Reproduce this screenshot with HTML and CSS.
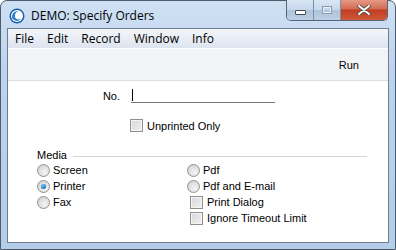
FILE: index.html
```html
<!DOCTYPE html>
<html lang="en">
<head>
    <meta charset="UTF-8">
    <title>DEMO: Specify Orders</title>
    <link rel="stylesheet" href="styles.css">
</head>
<body>
    <div class="window">
        <div class="titlebar">
            <svg class="app-icon" width="16" height="16" viewBox="0 0 16 16">
                <circle cx="8" cy="8" r="7.5" fill="#1d5fa8"/>
                <circle cx="8" cy="8" r="6" fill="#ffffff"/>
                <path d="M3 9 C3 5 6 3 9 3 C7 4 5.5 6 6 9 C6.5 11 9 12 12 11 C10.5 13 8 13.5 6 12.5 C4 11.5 3 10.5 3 9 Z" fill="#2d7fd0"/>
            </svg>
            <span class="title">DEMO: Specify Orders</span>
            <div class="caption-buttons">
                <div class="cap-btn cap-min"><span class="min-glyph"></span></div>
                <div class="cap-btn cap-max"><span class="max-glyph"></span></div>
                <div class="cap-btn cap-close">
                    <svg width="14" height="10" viewBox="0 0 14 10">
                        <path d="M2 1 L12 9 M12 1 L2 9" stroke="#4a4a4a" stroke-width="3.6" stroke-linecap="round"/>
                        <path d="M2 1 L12 9 M12 1 L2 9" stroke="#ffffff" stroke-width="2" stroke-linecap="round"/>
                    </svg>
                </div>
            </div>
        </div>
        <div class="client">
            <div class="menubar">
                <span>File</span>
                <span>Edit</span>
                <span>Record</span>
                <span>Window</span>
                <span>Info</span>
            </div>
            <div class="toolbar">
                <span class="run">Run</span>
            </div>
            <div class="form">
                <div class="field-row">
                    <label class="field-label">No.</label>
                    <div class="field-input"><span class="caret"></span></div>
                </div>
                <div class="check-row first-check">
                    <span class="checkbox"></span>
                    <span>Unprinted Only</span>
                </div>
                <div class="group-head">
                    <span>Media</span>
                    <span class="group-line"></span>
                </div>
                <div class="media">
                    <div class="media-col">
                        <div class="opt"><span class="radio"></span>Screen</div>
                        <div class="opt"><span class="radio checked"></span>Printer</div>
                        <div class="opt"><span class="radio"></span>Fax</div>
                    </div>
                    <div class="media-col">
                        <div class="opt"><span class="radio"></span>Pdf</div>
                        <div class="opt"><span class="radio"></span>Pdf and E-mail</div>
                        <div class="opt box-opt"><span class="checkbox"></span>Print Dialog</div>
                        <div class="opt box-opt"><span class="checkbox"></span>Ignore Timeout Limit</div>
                    </div>
                </div>
            </div>
        </div>
    </div>
</body>
</html>
```

FILE: styles.css
```css
body {
    margin: 0;
    width: 396px;
    height: 250px;
    overflow: hidden;
    background: #ffffff;
}

.window {
    width: 396px;
    height: 250px;
    box-sizing: border-box;
    border: 1px solid #4d5b6c;
    border-radius: 7px 7px 0 0;
    background: linear-gradient(180deg, #cfe0f3 0%, #bcd3ec 30%, #b4cde8 100%);
    padding: 0 6px 6px 6px;
    display: flex;
    flex-direction: column;
}

.titlebar {
    height: 27px;
    display: flex;
    align-items: flex-start;
}

.app-icon {
    margin: 7px 0 0 2px;
}

.title {
    margin: 6px 0 0 6px;
    font-family: "Open Sans", sans-serif;
    font-size: 12px;
    color: #000000;
}

.caption-buttons {
    margin-left: auto;
    margin-right: 1px;
    margin-top: -1px;
    display: flex;
    height: 20px;
    border: 1px solid #5a6573;
    border-top: none;
    border-radius: 0 0 5px 5px;
    overflow: hidden;
}

.cap-btn {
    display: flex;
    align-items: center;
    justify-content: center;
}

.cap-min,
.cap-max {
    width: 26px;
    background: linear-gradient(180deg, #d9e6f4 0%, #c5d7ec 50%, #aec3dc 51%, #bccfe6 100%);
    border-right: 1px solid #7f8fa3;
}

.min-glyph {
    width: 9px;
    height: 3px;
    margin-top: 5px;
    background: #ffffff;
    border: 1px solid #4a4a4a;
    border-radius: 1px;
}

.max-glyph {
    width: 8px;
    height: 6px;
    border: 1px solid #8c9aab;
    box-shadow: inset 0 0 0 1px #e6eef7;
}

.cap-close {
    width: 46px;
    background: linear-gradient(180deg, #e49a86 0%, #d36a52 45%, #c13d20 50%, #d0593c 100%);
}

.client {
    flex: 1;
    border: 1px solid #6f7d90;
    background: #ffffff;
    display: flex;
    flex-direction: column;
}

.menubar {
    height: 19px;
    display: flex;
    align-items: center;
    padding-left: 7px;
    gap: 13px;
    background: linear-gradient(180deg, #f4f6fa 0%, #e6ebf4 60%, #dde4ef 100%);
    border-bottom: 1px solid #ffffff;
    font-family: "Open Sans", sans-serif;
    font-size: 12px;
}

.toolbar {
    height: 31px;
    background: #f3f4f6;
    border-bottom: 1px solid #dcdde0;
    display: flex;
    align-items: center;
    justify-content: flex-end;
    padding-right: 29px;
}

.run,
.form {
    font-family: "Liberation Sans", Arial, sans-serif;
    font-size: 11px;
    color: #000000;
}

.form {
    padding-top: 8px;
}

.field-row {
    display: flex;
    align-items: flex-end;
    height: 14px;
}

.field-label {
    width: 112px;
    text-align: right;
    line-height: 14px;
}

.field-input {
    margin-left: 11px;
    width: 144px;
    height: 13px;
    border-bottom: 1px solid #7a7a7a;
}

.caret {
    display: block;
    width: 1px;
    height: 12px;
    margin-left: 1px;
    background: #000000;
}

.check-row {
    display: flex;
    align-items: center;
    gap: 4px;
}

.first-check {
    margin: 16px 0 0 122px;
}

.checkbox {
    width: 11px;
    height: 11px;
    border: 1px solid #8f8f8f;
    background: linear-gradient(135deg, #d6d6d6 0%, #f2f2f2 100%);
    box-shadow: inset 0 0 0 1px #f4f4f4;
    flex-shrink: 0;
}

.group-head {
    display: flex;
    align-items: center;
    margin: 17px 0 0 29px;
    gap: 6px;
}

.group-line {
    width: 294px;
    height: 1px;
    background: #d5d5d5;
    margin-top: 3px;
}

.media {
    display: flex;
    padding-left: 29px;
    margin-top: 1px;
}

.media-col {
    width: 150px;
}

.opt {
    display: flex;
    align-items: center;
    gap: 3px;
    height: 16px;
}

.box-opt {
    padding-left: 3px;
    gap: 4px;
}

.radio {
    width: 11px;
    height: 11px;
    border: 1px solid #939393;
    border-radius: 50%;
    background: radial-gradient(circle at 60% 65%, #f6f6f6 0%, #dedede 55%, #c8c8c8 100%);
    flex-shrink: 0;
    display: flex;
    align-items: center;
    justify-content: center;
}

.radio.checked::after {
    content: "";
    width: 5px;
    height: 5px;
    border-radius: 50%;
    background: radial-gradient(circle at 40% 35%, #7fc6f4 0%, #1b7bc4 60%, #0d4f8a 100%);
}
```
